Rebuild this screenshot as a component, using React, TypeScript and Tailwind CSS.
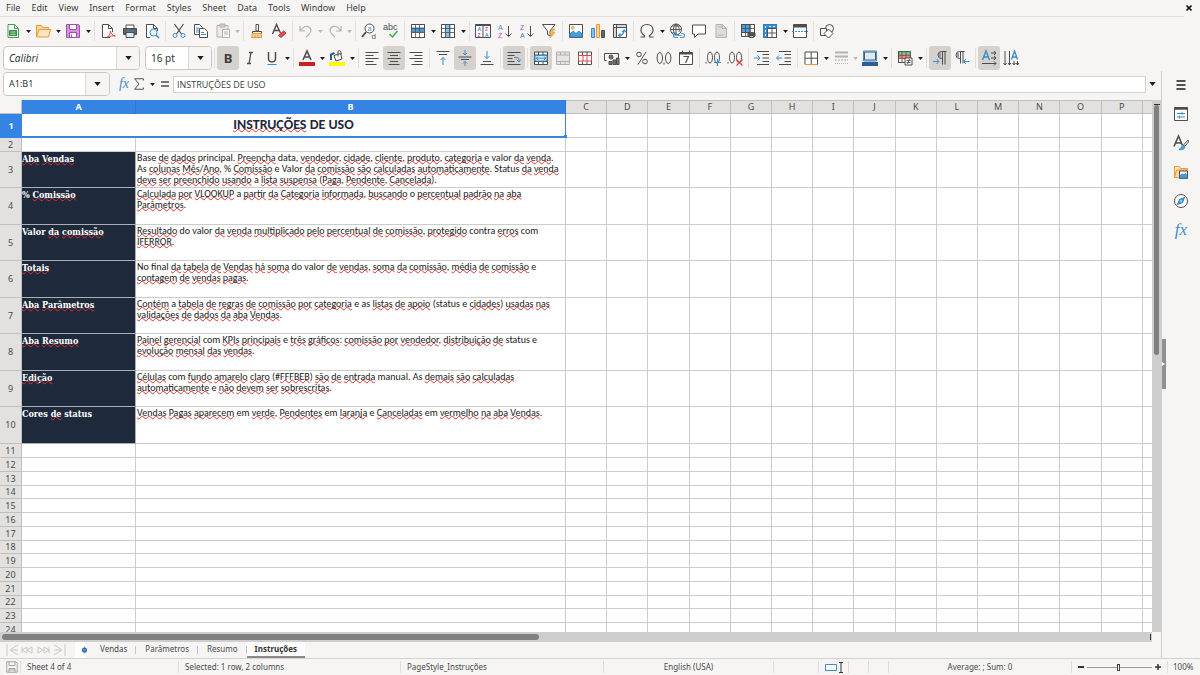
import type { ReactNode } from "react"
import { clsx } from "clsx"

const MENUS = ["File", "Edit", "View", "Insert", "Format", "Styles", "Sheet", "Data", "Tools", "Window", "Help"]
const COLUMNS = ["C", "D", "E", "F", "G", "H", "I", "J", "K", "L", "M", "N", "O", "P"]
const SHEETS = ["Vendas", "Parâmetros", "Resumo", "Instruções"]

const INSTRUCTIONS = [
  {
    title: "Aba Vendas",
    text: "Base de dados principal. Preencha data, vendedor, cidade, cliente, produto, categoria e valor da venda.\nAs colunas Mês/Ano, % Comissão e Valor da comissão são calculadas automaticamente. Status da venda\ndeve ser preenchido usando a lista suspensa (Paga, Pendente, Cancelada).",
  },
  {
    title: "% Comissão",
    text: "Calculada por VLOOKUP a partir da Categoria informada, buscando o percentual padrão na aba\nParâmetros.",
  },
  {
    title: "Valor da comissão",
    text: "Resultado do valor da venda multiplicado pelo percentual de comissão, protegido contra erros com\nIFERROR.",
  },
  {
    title: "Totais",
    text: "No final da tabela de Vendas há soma do valor de vendas, soma da comissão, média de comissão e\ncontagem de vendas pagas.",
  },
  {
    title: "Aba Parâmetros",
    text: "Contém a tabela de regras de comissão por categoria e as listas de apoio (status e cidades) usadas nas\nvalidações de dados da aba Vendas.",
  },
  {
    title: "Aba Resumo",
    text: "Painel gerencial com KPIs principais e três gráficos: comissão por vendedor, distribuição de status e\nevolução mensal das vendas.",
  },
  {
    title: "Edição",
    text: "Células com fundo amarelo claro (#FFFBEB) são de entrada manual. As demais são calculadas\nautomaticamente e não devem ser sobrescritas.",
  },
  {
    title: "Cores de status",
    text: "Vendas Pagas aparecem em verde, Pendentes em laranja e Canceladas em vermelho na aba Vendas.",
  },
]

// Words the English dictionary accepts, everything else gets a red wave
const KNOWN_WORDS = new Set([
  "Base", "principal", "data", "e", "valor", "Valor", "As", "as", "Status", "status", "a", "o", "do",
  "contra", "com", "No", "final", "em", "manual", "Cores", "DE", "USO",
])

function Spellchecked({ text }: { text: string }) {
  return (
    <>
      {text.split(/(\p{L}+)/u).map((part, i) =>
        i % 2 === 1 && !KNOWN_WORDS.has(part) ? (
          <span key={i} className="underline decoration-wavy decoration-[#e03030] decoration-1 [text-decoration-skip-ink:none] [text-underline-offset:-1px]">
            {part}
          </span>
        ) : (
          part
        )
      )}
    </>
  )
}

function Icon({ children, className = "h-4 w-4" }: { children: ReactNode; className?: string }) {
  return (
    <svg
      viewBox="0 0 16 16"
      className={clsx("shrink-0 overflow-visible font-['Liberation_Sans',sans-serif]", className)}
      fill="none"
      stroke="#4d4d4d"
      aria-hidden="true"
    >
      {children}
    </svg>
  )
}

function Caret({ dim, className = "h-[3px] w-[5px]" }: { dim?: boolean; className?: string }) {
  return (
    <svg viewBox="0 0 8 5" className={className} fill={dim ? "#b8b8b8" : "#1a1a1a"} aria-hidden="true">
      <path d="M0 0h8L4 5z" />
    </svg>
  )
}

interface ToolProps {
  label: string
  children: ReactNode
  menu?: boolean
  active?: boolean
  dim?: boolean
}

function Tool({ label, children, menu, active, dim }: ToolProps) {
  return (
    <>
      <button
        type="button"
        title={label}
        aria-label={label}
        aria-pressed={active}
        disabled={dim}
        className={clsx("flex h-6 w-[22px] shrink-0 items-center justify-center rounded-[3px]", active && "bg-[#d5d1cd]")}
      >
        <Icon className={dim ? "h-4 w-4 opacity-40 grayscale" : undefined}>{children}</Icon>
      </button>
      {menu && (
        <button
          type="button"
          aria-label={`${label} options`}
          disabled={dim}
          className={clsx("flex h-6 shrink-0 items-center justify-center", dim ? "w-[7px]" : "w-2")}
        >
          <Caret dim={dim} className="mt-0.5 h-[3px] w-[5px]" />
        </button>
      )}
    </>
  )
}

function Separator() {
  return <div className="mx-0.5 h-5 w-px shrink-0 bg-[#e2e0de]" />
}

const TABLE_GRID = "M1.5 1.5h13v13h-13zM1.5 5.5h13M1.5 9.5h13M5.5 1.5v13M9.5 1.5v13"

function StandardToolbar() {
  return (
    <div className="flex h-[27px] items-center pl-0.5">
      <Tool label="New" menu>
        <path d="M3 1.5h6.500l4 4v9H3z" fill="#fff" stroke="#3f9b4f" />
        <path d="M9.500 1.500v4h4" stroke="#3f9b4f" />
        <path d="M4.500 7.500h7v5h-7z M4.500 10h7 M8 7.500v5" fill="#3f9b4f" stroke="#2f8a40" />
        <path d="M5.500 9h5M5.500 11.300h5" stroke="#fff" strokeWidth=".7" />
      </Tool>
      <Tool label="Open" menu>
        <path d="M1.500 13.500v-11h5l1 2h6v2.500" fill="#fbd9a0" stroke="#e79a3c" />
        <path d="M1.500 14l2.500-7.500h11.500L13.500 14z" fill="#fce5bd" stroke="#e79a3c" />
      </Tool>
      <Tool label="Save" menu>
        <path d="M1.500 1.500h12l1 1v12h-13z" fill="#d492dc" stroke="#a34fb0" />
        <path d="M4.500 1.500h7v5h-7zM4.500 9.500h7v5h-7z" fill="#fff" stroke="#a34fb0" />
        <path d="M6.500 11.500v3" stroke="#a34fb0" />
      </Tool>
      <Separator />
      <Tool label="Export as PDF">
        <path d="M10 14.500H2.500v-13h6l4 4V9" fill="#fff" />
        <path d="M8.500 1.500v4h4" />
        <path d="M7.500 14c2-1.500 3-4 2.800-6 .8 3 2 4.500 5 5-3-.3-5 0-7.800 1z" stroke="#d9484b" fill="#fff" />
      </Tool>
      <Tool label="Print">
        <path d="M4 5V2h8v3" fill="#fff" />
        <path d="M1.500 5.500h13v6h-13z" fill="#636363" stroke="#4d4d4d" />
        <path d="M4 9.500h8v5H4z" fill="#d5ecfa" stroke="#4d4d4d" />
        <path d="M4 8h8" stroke="#3b8ccc" />
      </Tool>
      <Tool label="Toggle Print Preview">
        <path d="M6 14.500H2.500v-13h7l4 4V8" fill="#fff" />
        <path d="M9.500 1.500v4h4" />
        <circle cx="9.500" cy="9.500" r="3.500" stroke="#3b8ccc" fill="#e3f2fc" />
        <path d="M12 12l3 3" stroke="#3b8ccc" strokeWidth="1.500" />
      </Tool>
      <Separator />
      <Tool label="Cut">
        <path d="M3.500 1l7 10M12.500 1l-7 10" strokeWidth="1.200" />
        <circle cx="4" cy="12.500" r="2" stroke="#3b8ccc" />
        <circle cx="12" cy="12.500" r="2" stroke="#3b8ccc" />
      </Tool>
      <Tool label="Copy">
        <path d="M1.500 1.500h5l3 3v7h-8z" fill="#fff" />
        <path d="M6.500 5.500h5l3 3v6h-8z" fill="#fff" />
        <path d="M3 5h3M3 7h3M3 9h3M8 9.500h3M8 11.500h5" stroke="#3b8ccc" />
      </Tool>
      <Tool label="Paste" menu dim>
        <path d="M2 2.500h11V14H2z" fill="#ddd" />
        <path d="M5 1h5v3H5z" fill="#999" />
        <path d="M7.500 6.500h7v8h-7z" fill="#fff" />
        <path d="M9 9h4M9 11h4" />
      </Tool>
      <Separator />
      <Tool label="Clone Formatting">
        <path d="M7 1.500h2.500V8H7zM3.500 8.500h9v2h-9z" fill="#fff" />
        <path d="M3.500 10.500h9v4h-10z" fill="#fbd28c" stroke="#e79a3c" />
        <path d="M6 12v2.500M9 12v2.500" stroke="#e79a3c" />
      </Tool>
      <Tool label="Clear Direct Formatting">
        <path d="M1.500 11L5.500 1.500 9.500 10M3 7.500h5.500" strokeWidth="1.400" />
        <path d="M7.500 12.500l5-4.500 2.500 2-5 4.500z" fill="#e8484c" stroke="#cf3237" />
      </Tool>
      <Separator />
      <Tool label="Undo" menu dim>
        <path d="M2 3v5h5M2.500 7.500C5 3 9 2.500 11.500 4.500c3 2.500 1 6-3.500 9.500" strokeWidth="1.100" />
      </Tool>
      <Tool label="Redo" menu dim>
        <path d="M14 3v5H9M13.500 7.500C11 3 7 2.500 4.500 4.500c-3 2.500-1 6 3.500 9.500" strokeWidth="1.100" />
      </Tool>
      <Separator />
      <Tool label="Find and Replace">
        <circle cx="8.500" cy="5.500" r="4.500" fill="#fff" />
        <path d="M5 9l-4 5" strokeWidth="2" />
        <text x="6.500" y="7.500" fontSize="7" fill="#3b8ccc" stroke="none">a</text>
        <text x="10.500" y="15.500" fontSize="8" fill="#4d4d4d" stroke="none">d</text>
      </Tool>
      <Tool label="Spelling">
        <text x="0" y="7" fontSize="9" fill="#4d4d4d" stroke="none">abc</text>
        <path d="M6.500 11l3 3 5-6" stroke="#3daa57" strokeWidth="1.500" />
      </Tool>
      <Separator />
      <Tool label="Row" menu>
        <path d="M1.500 1.500h13v13h-13z" fill="#fff" />
        <path d="M1.500 5h13v4h-13z" fill="#4a9ede" stroke="#3b8ccc" />
        <path d={TABLE_GRID} strokeWidth=".8" />
      </Tool>
      <Tool label="Column" menu>
        <path d="M1.500 1.500h13v13h-13z" fill="#fff" />
        <path d="M5.500 1.500h4.500v13H5.500z" fill="#83c3ef" stroke="#3b8ccc" />
        <path d={TABLE_GRID} strokeWidth=".8" />
      </Tool>
      <Separator />
      <Tool label="Sort">
        <path d="M.5 1.500h15v13H.5zM8 3v11.500" fill="#fff" />
        <path d="M.5 2h15" strokeWidth="2" />
        <text x="2.500" y="8" fontSize="5" fontWeight="700" fill="#3b8ccc" stroke="none">A</text>
        <text x="2.500" y="14" fontSize="5" fontWeight="700" fill="#b04dbd" stroke="none">Z</text>
        <text x="10" y="8" fontSize="5" fontWeight="700" fill="#b04dbd" stroke="none">Z</text>
        <text x="10" y="14" fontSize="5" fontWeight="700" fill="#3b8ccc" stroke="none">A</text>
      </Tool>
      <Tool label="Sort Ascending">
        <text x="1" y="6.500" fontSize="7" fill="#3b8ccc" stroke="none">A</text>
        <text x="1" y="15" fontSize="7" fill="#b04dbd" stroke="none">Z</text>
        <path d="M11.500 3v10.500M8.500 10.500l3 3 3-3" />
      </Tool>
      <Tool label="Sort Descending">
        <text x="1" y="6.500" fontSize="7" fill="#b04dbd" stroke="none">Z</text>
        <text x="1" y="15" fontSize="7" fill="#3b8ccc" stroke="none">A</text>
        <path d="M11.500 3v10.500M8.500 10.500l3 3 3-3" />
      </Tool>
      <Tool label="AutoFilter">
        <path d="M1.500 1.500h12.500L9 8v5l-2.500-1.500V8z" fill="#fff" />
        <path d="M12 6l-4 5h2.500L9 15l5-5.500h-2.500L14 6z" fill="#fbb45c" stroke="#e79a3c" strokeWidth=".7" />
      </Tool>
      <Separator />
      <Tool label="Insert Image">
        <path d="M1.500 1.500h13v13h-13z" fill="#fff" />
        <path d="M2 14v-3l3-3 3 2.500L11 8l3 3v3z" fill="#4a9ede" stroke="#3b8ccc" />
        <circle cx="4.800" cy="4.800" r="1.300" fill="#fbd28c" stroke="#e79a3c" />
      </Tool>
      <Tool label="Insert Chart">
        <path d="M1.500 5.500h3v9h-3z" fill="#83c3ef" stroke="#3b8ccc" />
        <path d="M6.500 1.500h3v13h-3z" fill="#fbd28c" stroke="#e79a3c" />
        <path d="M11.500 7.500h3v7h-3z" fill="#666" />
      </Tool>
      <Tool label="Insert Pivot Table">
        <path d="M1.500 1.500h13v13h-13zM1.500 4.500h13M4.500 1.500v13" fill="#fff" />
        <path d="M7 12.500c4 0 5-2 5-5.500M10 9l2-2 2 2M8.500 10.500l-2 2 2 1.500" stroke="#3b8ccc" strokeWidth="1.200" />
        <path d="M5 3h9M3 5v9" stroke="#aaa" />
      </Tool>
      <Separator />
      <Tool label="Insert Special Character" menu>
        <path d="M1.500 14h4v-1.500C3 11 2 9 2 7c0-3.300 2.500-5.500 6-5.500S14 3.700 14 7c0 2-1 4-3.500 5.500V14h4" strokeWidth="1.200" />
      </Tool>
      <Tool label="Insert Hyperlink">
        <circle cx="7" cy="6.500" r="5.500" />
        <path d="M1.500 6.500h11M7 1v11M3 3h8M3 10h4M7 1C3.500 4 3.500 9 7 12M7 1c3.500 3 3.500 6 3 8" strokeWidth=".9" />
        <path d="M8 10.500H6.500a2 2 0 000 4H9M12 10.500h1.500a2 2 0 010 4H11M8.500 12.500h4" stroke="#4a9ede" strokeWidth="1.200" />
      </Tool>
      <Tool label="Insert Comment">
        <path d="M1.500 2h13v9H7l-3.500 3.500V11h-2z" fill="#fff" />
      </Tool>
      <Tool label="Headers and Footers" dim>
        <path d="M3 1.500h6.500l4 4v9H3z" fill="#bbb" />
        <path d="M5 4h4M5 12h6M9.500 1.500v4h4" />
      </Tool>
      <Separator />
      <Tool label="Define Print Area">
        <path d="M1.500 1.500h13v12h-13z" fill="#fff" />
        <path d="M1.500 1.500h8.500v8H1.500z" fill="#4a9ede" />
        <path d="M1.500 1.500h13v12h-13zM1.500 5.500h13M1.500 9.500h13M5.500 1.500v12M10 1.500v12" strokeWidth=".8" />
        <path d="M8 10h7v3H8z" fill="#555" />
        <path d="M9.500 12.500h4v2h-4z" fill="#9fd0f2" />
      </Tool>
      <Tool label="Freeze Rows and Columns" menu>
        <path d="M1.500 1.500h13v13h-13z" fill="#fff" />
        <path d="M1.500 1.500h13v4h-9v9h-4z" fill="#3b8ccc" stroke="#2f7dbb" />
        <path d="M5.500 5.500h9v9h-9zM5.500 10h9M10 5.500v9" strokeWidth=".9" />
        <path d="M3.500 3v2M3.500 7v2M3.500 11v2M7 3.500h2M11 3.500h2" stroke="#d5ecfa" />
      </Tool>
      <Tool label="Split Window">
        <path d="M1.500 1.500h13v13h-13z" fill="#fff" />
        <path d="M1.500 3h13" strokeWidth="3" />
        <path d="M0 8.500h16" stroke="#3b8ccc" strokeDasharray="2 1" />
      </Tool>
      <Separator />
      <Tool label="Show Draw Functions">
        <circle cx="10.500" cy="5.500" r="4" />
        <path d="M1.500 5.500h6v7h-6z" fill="#f6f5f4" />
        <path d="M9.500 6l4.500 4.500L9.500 15 5 10.500z" fill="#fff" />
      </Tool>
    </div>
  )
}

interface PickerProps {
  label: string
  value: string
  className: string
  italic?: boolean
}

function Picker({ label, value, className, italic }: PickerProps) {
  return (
    <div className={clsx("relative flex h-6 shrink-0 rounded-[4px] border border-[#cdc7c2] bg-white", className)}>
      <select
        aria-label={label}
        className={clsx("w-full appearance-none bg-transparent pl-[5px] pr-6 text-[10px] leading-4 text-[#2e3436] outline-none", italic && "italic")}
        defaultValue={value}
      >
        <option>{value}</option>
      </select>
      <div className="pointer-events-none absolute inset-y-0 right-0 flex w-[23px] items-center justify-center rounded-r-[3px] border-l border-[#dcd8d5] bg-[#f6f5f4]">
        <Caret className="h-1 w-[7px]" />
      </div>
    </div>
  )
}

function FormattingToolbar() {
  return (
    <div className="flex h-[27px] items-center pl-[3px]">
      <Picker label="Font Name" value="Calibri" className="w-[137px]" italic />
      <Picker label="Font Size" value="16 pt" className="ml-[5px] w-[67px]" />
      <Separator />
      <Tool label="Bold" active>
        <text x="8" y="13" fontSize="13" fontWeight="700" textAnchor="middle" fill="#3d3d3d" stroke="none" fontFamily="Noto Sans">B</text>
      </Tool>
      <Tool label="Italic">
        <path d="M7 2.500h4M5 13.500h4M9 2.500l-2 11" strokeWidth="1.300" />
      </Tool>
      <Tool label="Underline" menu>
        <path d="M4.500 2v6.500c0 4.500 7 4.500 7 0V2" strokeWidth="1.500" />
        <path d="M3.500 14.500h9" stroke="#3b8ccc" />
      </Tool>
      <Separator />
      <Tool label="Font Color" menu>
        <path d="M4 10l4-9 4 9M5.500 7h5" strokeWidth="1.600" />
        <path d="M0 14h16" stroke="#c9211e" strokeWidth="4" />
      </Tool>
      <Tool label="Background Color" menu>
        <path d="M5 5.500l6.500-2 1.500 5.500-6 2z" fill="#fff" />
        <path d="M9 6.500V1.500c0-1.500 3-1 3 1l.5 2" />
        <path d="M2 10V4.500l3.500-1.500" stroke="#2a6099" strokeWidth="2" />
        <path d="M0 14h16" stroke="#ffff00" strokeWidth="4" />
      </Tool>
      <Separator />
      <Tool label="Align Left">
        <path d="M1.500 2.500h13M1.500 5.500h8M1.500 8.500h13M1.500 11.500h8M1.500 14.500h11" />
      </Tool>
      <Tool label="Center Horizontally" active>
        <path d="M1.500 2.500h13M4 5.500h8M1.500 8.500h13M4 11.500h8M2.500 14.500h11" />
      </Tool>
      <Tool label="Align Right">
        <path d="M1.500 2.500h13M6.500 5.500h8M1.500 8.500h13M6.500 11.500h8M3.500 14.500h11" />
      </Tool>
      <Separator />
      <Tool label="Align Top">
        <path d="M1.500 1.500h13M4 4.500h8" />
        <path d="M8 15V7.500M5.500 10L8 7.500l2.500 2.500" stroke="#3b8ccc" />
      </Tool>
      <Tool label="Center Vertically" active>
        <path d="M1.500 7h13M4 9.500h8" />
        <path d="M8 0v5M6 3l2 2 2-2M8 16v-4.500M6 13.500l2-2 2 2" stroke="#3b8ccc" />
      </Tool>
      <Tool label="Align Bottom">
        <path d="M4 11.500h8M1.500 14.500h13" />
        <path d="M8 1v7.500M5.500 6L8 8.500 10.500 6" stroke="#3b8ccc" />
      </Tool>
      <Separator />
      <Tool label="Wrap Text" active>
        <path d="M1.500 2.500h13M1.500 5.500h7M1.500 8.500h5M1.500 11.500h7M1.500 14.500h13" />
        <path d="M8 7.500h3c2 0 2 1 2 4M10.500 9.500l2.500 2.500 2-2.500" stroke="#3b8ccc" />
      </Tool>
      <Separator />
      <Tool label="Merge and Center Cells" active>
        <path d="M1.500 2h13v12.500h-13zM1.500 5h13M1.500 11.500h13M5.500 2v3M10 2v3M5.500 11.500v3M10 11.500v3" fill="#fff" />
        <path d="M2 5.500h12v5.500H2z" fill="#d5ecfa" stroke="#3b8ccc" />
        <path d="M3 8.200h10M5 6.500L3.500 8.200 5 10M11 6.500l1.500 1.700L11 10" stroke="#3b8ccc" />
      </Tool>
      <Tool label="Merge Cells" dim>
        <path d="M1.500 2h13v12.500h-13zM1.500 5h13M1.500 11.500h13M5.500 2v3M10 2v3M5.500 11.500v3M10 11.500v3" fill="#ccc" />
      </Tool>
      <Tool label="Unmerge Cells">
        <path d="M1.500 2h13v12.500h-13zM5.500 2v3M10 2v3M5.500 11.500v3M10 11.500v3" fill="#fff" />
        <path d="M1.500 5.500h13v5.500h-13zM6 5.500V11M10 5.500V11" stroke="#d9484b" fill="#fff" />
      </Tool>
      <Separator />
      <Tool label="Format as Currency" menu>
        <path d="M2.500 10.500h-2v-7h14v6" />
        <circle cx="7" cy="7" r="2" fill="#777" />
        <path d="M5 11.500h3v3H5zM9 10h3v4.500H9zM12.500 8H15v6.500h-2.500z" fill="#777" />
      </Tool>
      <Tool label="Format as Percent">
        <circle cx="5" cy="4.500" r="2.300" />
        <circle cx="11" cy="11.500" r="2.300" />
        <path d="M12 2L4 14.500" />
      </Tool>
      <Tool label="Format as Number">
        <ellipse cx="3.800" cy="8" rx="2.700" ry="5.500" />
        <ellipse cx="12.200" cy="8" rx="2.700" ry="5.500" />
        <path d="M8 12.500v2" />
      </Tool>
      <Tool label="Format as Date">
        <path d="M1.500 2.500h13v12h-13zM4.500.5v3M11.500.5v3" fill="#fff" />
        <path d="M1.500 3.500h13" strokeWidth="2" />
        <path d="M5.500 6.500h5l-3 6.500" strokeWidth="1.200" />
      </Tool>
      <Separator />
      <Tool label="Add Decimal Place">
        <ellipse cx="5" cy="7.500" rx="2.500" ry="5.500" />
        <ellipse cx="12" cy="7.500" rx="2.500" ry="5.500" />
        <path d="M1 12v1.500" />
        <path d="M12.500 9v7M9 12.500h7" stroke="#3b8ccc" strokeWidth="1.200" />
      </Tool>
      <Tool label="Delete Decimal Place">
        <ellipse cx="5" cy="7.500" rx="2.500" ry="5.500" />
        <ellipse cx="12" cy="7.500" rx="2.500" ry="5.500" />
        <path d="M1 12v1.500" />
        <path d="M9.500 9.500l6 6M15.500 9.500l-6 6" stroke="#e8484c" strokeWidth="1.200" />
      </Tool>
      <Separator />
      <Tool label="Increase Indent">
        <path d="M3 1.500h12M8.500 4.500H15M8.500 8H15M8.500 11.500H15M3 14.500h12" />
        <path d="M0 8h6M3.500 5.500L6 8l-2.500 2.500" stroke="#3b8ccc" />
      </Tool>
      <Tool label="Decrease Indent">
        <path d="M3 1.500h12M8.500 4.500H15M8.500 8H15M8.500 11.500H15M3 14.500h12" />
        <path d="M.5 8h6M3 5.500L.5 8 3 10.500" stroke="#3b8ccc" />
      </Tool>
      <Separator />
      <Tool label="Borders" menu>
        <path d="M2 2h12.500v12.500H2zM8.200 2v12.500M2 8.200h12.500" fill="#fff" />
        <path d="M2 14.500h12.500" stroke="#e79a3c" />
      </Tool>
      <Tool label="Border Style" menu dim>
        <path d="M2 2.500h13M2 6.500h13" strokeWidth="2" />
        <path d="M2 10h13" strokeDasharray="2 1" />
        <path d="M2 13.500h13" strokeDasharray="1 1" />
      </Tool>
      <Tool label="Border Color" menu>
        <path d="M2.500 2h11v8h-11z" fill="#d5ecfa" stroke="#555" />
        <path d="M1.500 1h13v10h-13z" stroke="#3b8ccc" />
        <path d="M0 14h16" stroke="#2a6099" strokeWidth="4" />
      </Tool>
      <Separator />
      <Tool label="Conditional" menu>
        <path d="M1.500 1.500h12v11h-12z" fill="#fff" />
        <path d="M2 2h11v3H2z" fill="#8fd19e" stroke="#3f9b4f" />
        <path d="M2 5.500h11v3H2z" fill="#f08d8d" stroke="#d9484b" />
        <path d="M1.500 1.500v11H8M5 2v10M9 2v6" strokeWidth=".8" />
        <path d="M8 8h7v7H8z" fill="#fff" />
        <path d="M9.500 10.500h4M9.500 12.500h4M12.500 9l-2 5" strokeWidth=".9" />
      </Tool>
      <Separator />
      <Tool label="Left-To-Right" active>
        <path d="M14.500 1.500h-5a3.500 3.500 0 000 7h1M10.500 1.500v13M13 1.500v13" />
        <path d="M8 2.500v5" stroke="#999" strokeWidth="2" />
        <path d="M1 11.500h6M4.500 9L7 11.500 4.500 14" stroke="#3b8ccc" />
      </Tool>
      <Tool label="Right-To-Left">
        <path d="M10.500 1.500h-5a3.500 3.500 0 000 7h1M6.500 1.500v12M9 1.500v12" />
        <path d="M4 2.500v5" stroke="#999" strokeWidth="2" />
        <path d="M10 11.500h5.500M12 9l-2.500 2.500L12 14" stroke="#3b8ccc" />
      </Tool>
      <Separator />
      <Tool label="Text direction from left to right" active>
        <path d="M1.500 10l3.500-9 3.500 9M2.500 7h5" stroke="#3b8ccc" strokeWidth="1.400" />
        <path d="M10 3h5M13 1l2 2-2 2M10 8h5M13 6l2 2-2 2M1 13.500h14M13 11.500l2 2-2 2" />
      </Tool>
      <Tool label="Text direction from top to bottom">
        <path d="M8.500 9.500l3-8.500 3 8.500M9.500 7h4" stroke="#3b8ccc" strokeWidth="1.400" />
        <path d="M2 1v14M.5 13L2 15l1.500-2M6.500 1v14M5 13l1.500 2L8 13M11 11v4M9.500 13l1.500 2 1.500-2M14.500 11v4M13 13l1.500 2 1.500-2" />
      </Tool>
    </div>
  )
}

function FormulaBar() {
  return (
    <div className="flex h-[29px] shrink-0 items-center pb-[3px] pl-[3px]">
      <div className="flex h-6 w-[107px] shrink-0 overflow-hidden rounded-[4px] border border-[#cdc7c2] bg-white">
        <input aria-label="Name Box" defaultValue="A1:B1" className="min-w-0 flex-1 pl-[5px] text-[9px] text-[#2e3436] outline-none" />
        <button type="button" aria-label="Cell references" className="flex w-6 items-center justify-center border-l border-[#dcd8d5] bg-[#f6f5f4]">
          <Caret className="h-1 w-[7px]" />
        </button>
      </div>
      <button type="button" aria-label="Function Wizard" className="ml-2 w-3 text-center font-['Liberation_Serif',serif] text-[14px] leading-5 text-[#3b8ccc] italic">
        fx
      </button>
      <button type="button" aria-label="Select Function" className="ml-px flex items-center">
        <Icon className="h-[14px] w-4">
          <path d="M13 4V2H3l5 6-5 6h10v-2" strokeWidth="1.100" />
        </Icon>
        <Caret className="ml-[3px] h-[3px] w-[5px]" />
      </button>
      <button type="button" aria-label="Formula" className="ml-[6px]">
        <svg viewBox="0 0 8 6" className="h-1.5 w-2" aria-hidden="true">
          <path d="M0 1h8M0 5h8" stroke="#4d4d4d" strokeWidth="1.500" />
        </svg>
      </button>
      <input
        aria-label="Input line"
        defaultValue="INSTRUÇÕES DE USO"
        className="ml-1 h-[17px] min-w-0 flex-1 border border-[#d5d2cf] bg-white pl-[3px] font-['Open_Sans',sans-serif] text-[9px] text-[#3d3d3d] outline-none"
      />
      <button type="button" aria-label="Expand Formula Bar" className="flex w-3 shrink-0 items-center justify-center">
        <Caret className="h-1 w-[7px]" />
      </button>
      <div className="w-[3px]" />
    </div>
  )
}

const HEAD = "border-r border-b border-[#bfbfbf] bg-[#e2e1e0] text-center font-['Noto_Sans',sans-serif] text-[9px] leading-3 font-normal text-[#4a4a4a]"
const CELL = "border-r border-b border-[#cccccc]"

function EmptyCells() {
  return (
    <>
      {COLUMNS.map((col) => (
        <td key={col} className={CELL} />
      ))}
      <td className="border-b border-[#cccccc]" />
    </>
  )
}

function Grid() {
  return (
    <table className="w-full table-fixed border-separate border-spacing-0 bg-white">
      <colgroup>
        <col className="w-[22px]" />
        <col className="w-[114px]" />
        <col className="w-[430px]" />
        {COLUMNS.map((col) => (
          <col key={col} />
        ))}
        <col className="w-[9px]" />
      </colgroup>
      <thead>
        <tr className="h-3.5">
          <td className="border-r border-b border-[#bfbfbf] bg-[#f6f5f4]" />
          {["A", "B"].map((col) => (
            <th key={col} scope="col" className="border-r border-[#2f76cc] bg-[#3584e4] font-['Noto_Sans',sans-serif] text-[9px] leading-3 font-bold text-white">
              {col}
            </th>
          ))}
          {COLUMNS.map((col) => (
            <th key={col} scope="col" className={clsx(HEAD, "border-t")}>
              {col}
            </th>
          ))}
          <td className="border-t border-b border-[#bfbfbf] bg-[#e2e1e0]" />
        </tr>
      </thead>
      <tbody>
        <tr className="h-6">
          <th scope="row" className="bg-[#3584e4] font-['Noto_Sans',sans-serif] text-[9px] leading-3 font-bold text-white">1</th>
          <td
            colSpan={2}
            className="relative border-r border-b-2 border-[#3584e4] text-center font-[Carlito,Lato,sans-serif] text-[14px] leading-4 font-bold text-[#1e293b]"
          >
            <Spellchecked text="INSTRUÇÕES DE USO" />
            <span className="absolute -right-0.5 -bottom-0.5 h-[3px] w-[3px] bg-[#3584e4]" />
          </td>
          <EmptyCells />
        </tr>
        <tr className="h-3.5">
          <th scope="row" className={HEAD}>2</th>
          <td className={CELL} />
          <td className={CELL} />
          <EmptyCells />
        </tr>
        {INSTRUCTIONS.map((row, i) => (
          <tr key={row.title} className={i % 2 === 0 ? "h-9" : "h-[37px]"}>
            <th scope="row" className={HEAD}>{i + 3}</th>
            <td className="border-r border-b border-[#aab0b8] bg-[#1e293b] pt-0.5 align-top font-['DejaVu_Serif_Condensed','DejaVu_Serif',serif] text-[9px] leading-[11px] font-bold whitespace-nowrap text-white">
              <Spellchecked text={row.title} />
            </td>
            <td className={clsx(CELL, "pl-px align-top font-[Carlito,Lato,sans-serif] text-[10px] leading-[11px] whitespace-pre text-[#1a1a1a]")}>
              <Spellchecked text={row.text} />
            </td>
            <EmptyCells />
          </tr>
        ))}
        {Array.from({ length: 14 }, (_, i) => (
          <tr key={i} className={i % 4 === 3 ? "h-[13px]" : "h-3.5"}>
            <th scope="row" className={HEAD}>{i + 11}</th>
            <td className={CELL} />
            <td className={CELL} />
            <EmptyCells />
          </tr>
        ))}
      </tbody>
    </table>
  )
}

function SheetTabs() {
  return (
    <div className="flex h-4 shrink-0 items-stretch text-[8px] leading-[14px] text-[#4a4a4a]">
      <button type="button" aria-label="Sheet navigation" className="ml-[6px] flex w-[61px] items-center">
        <svg viewBox="0 0 60 12" className="h-3 w-[60px]" fill="none" stroke="#c8c8c8" aria-hidden="true">
          <path d="M1 0v12M12 1L4 6l8 5M4 6h8M21 3l-5 3 5 3zM26 3l-5 3 5 3zM32 3v6l5-3zM38 3v6l5-3zM48 1l8 5-8 5M48 6h8M59 0v12M16 3v6M43 3v6" />
        </svg>
      </button>
      <button type="button" aria-label="Add Sheet" className="ml-2 flex w-4 items-center bg-[linear-gradient(90deg,#fff_10px,transparent_10px)]">
        <svg viewBox="0 0 16 16" className="h-4 w-4" aria-hidden="true">
          <circle cx="9.500" cy="8" r="1.800" fill="#fff" stroke="#2a6cb5" strokeWidth="1.500" />
          <path d="M9.500 4.500v7M7 8h5" stroke="#2a6cb5" strokeWidth=".6" />
        </svg>
      </button>
      <nav className="flex items-stretch" aria-label="Sheets">
        {SHEETS.map((sheet, i) => (
          <button
            key={sheet}
            type="button"
            aria-current={i === 3}
            className={clsx(
              "relative flex items-start",
              i === 3
                ? "border-b-2 border-[#8a8a8a] bg-white px-2 font-bold text-[#333]"
                : "px-[9px] after:absolute after:top-1 after:right-0 after:h-2 after:w-px after:bg-[#c4c4c4]"
            )}
          >
            {sheet}
          </button>
        ))}
      </nav>
    </div>
  )
}

function Sidebar() {
  return (
    <aside className="relative flex w-[39px] shrink-0 flex-col items-center gap-[13px] border-l border-[#cfcdcb] pt-1.5">
      <button type="button" aria-label="Sidebar Settings">
        <Icon>
          <path d="M3.500 4h9M3.500 8h9M3.500 12h9" stroke="#1a1a1a" strokeWidth="1.600" />
        </Icon>
      </button>
      <button type="button" aria-label="Properties">
        <Icon>
          <path d="M1.500 1.500h13v13h-13z" fill="#fff" />
          <path d="M1.500 2.500h13" strokeWidth="2.500" />
          <path d="M4 7.500h8M4 11h8M9 5.800v3M6.500 9.500v3" stroke="#3b8ccc" />
        </Icon>
      </button>
      <button type="button" aria-label="Styles">
        <Icon>
          <path d="M1 11.500L5.500 1l4 9.500M2.500 8h6" strokeWidth="1.600" />
          <path d="M15 5l-4.500 5 1 1.500L15.500 7z" fill="#fff" />
          <path d="M10.500 10.500c-2 0-2 3-4.500 4 3 .8 6-.5 6-3z" fill="#4a9ede" stroke="#3b8ccc" />
        </Icon>
      </button>
      <button type="button" aria-label="Gallery">
        <Icon>
          <path d="M1.500 13.500v-11h5l1 2h7v2" fill="#fce5bd" stroke="#e79a3c" />
          <path d="M1.500 13.500L3.500 6h11v7.500z" fill="#fbd9a0" stroke="#e79a3c" />
          <path d="M6.500 7h8v7.500h-8z" fill="#fff" />
          <path d="M7 14v-2.500l2-1.500 2 1 1.500-1.500 1.500 2V14z" fill="#4a9ede" stroke="#3b8ccc" />
        </Icon>
      </button>
      <button type="button" aria-label="Navigator">
        <Icon>
          <circle cx="8" cy="8" r="6.500" fill="#fff" />
          <path d="M11.500 4.500l-2 5-5 2 2-5z" fill="#4a9ede" stroke="#2f7dbb" />
          <circle cx="8" cy="8" r=".8" fill="#fff" stroke="none" />
        </Icon>
      </button>
      <button type="button" aria-label="Functions" className="h-4 font-['Liberation_Serif',serif] text-[17px] leading-4 text-[#3b8ccc] italic">
        fx
      </button>
      <button type="button" aria-label="Hide Sidebar" className="absolute top-[268px] left-0 flex h-[50px] w-1 items-center bg-[#8f9190]">
        <svg viewBox="0 0 4 4" className="h-1 w-1" fill="#fff" aria-hidden="true">
          <path d="M0 0l3 2-3 2z" />
        </svg>
      </button>
    </aside>
  )
}

const STATUS = "flex h-3 shrink-0 items-center border-l border-[#e0dedc]"

function StatusBar() {
  return (
    <footer className="flex h-[17px] shrink-0 items-center border-t border-[#d5d3d1] text-[8px] leading-3 text-[#4a4a4a]">
      <div className="flex w-5 justify-end pr-0.5">
        <Icon className="h-3 w-3">
          <path d="M1 1h12l2 2v12H1zM4 1v5h8V1M4 15v-5h8v5M4 12h8" stroke="#a0a0a0" strokeWidth="1.300" />
        </Icon>
      </div>
      <div className={clsx(STATUS, "w-[158px] pl-1.5")}>Sheet 4 of 4</div>
      <div className={clsx(STATUS, "w-[222px] pl-1.5")}>Selected: 1 row, 2 columns</div>
      <div className={clsx(STATUS, "w-[203px] pl-1.5")}>PageStyle_Instruções</div>
      <div className={clsx(STATUS, "min-w-0 flex-1 justify-center")}>English (USA)</div>
      <div className={clsx(STATUS, "w-[45px]")} />
      <div className={clsx(STATUS, "w-[30px] justify-center")}>
        <svg viewBox="0 0 20 12" className="h-3 w-5" fill="none" aria-hidden="true">
          <path d="M1.500 3.500h11v6h-11z" fill="#fff" stroke="#3b8ccc" />
          <path d="M15 1.500h4M15 11.500h4M17 1.500v10" stroke="#333" />
        </svg>
      </div>
      <div className={clsx(STATUS, "w-5")} />
      <div className={clsx(STATUS, "w-5")} />
      <div className={clsx(STATUS, "w-[183px] justify-center")}>Average: ; Sum: 0</div>
      <div className={clsx(STATUS, "w-[96px] justify-between px-1.5")}>
        <button type="button" aria-label="Zoom Out" className="h-0.5 w-1.5 bg-[#333]" />
        <input
          type="range"
          aria-label="Zoom"
          defaultValue={48}
          className="h-2 w-[65px] appearance-none bg-[linear-gradient(#999,#999)] bg-[length:100%_1px] bg-center bg-no-repeat [&::-webkit-slider-thumb]:h-[7px] [&::-webkit-slider-thumb]:w-[3px] [&::-webkit-slider-thumb]:appearance-none [&::-webkit-slider-thumb]:border [&::-webkit-slider-thumb]:border-[#444] [&::-webkit-slider-thumb]:bg-white"
        />
        <button type="button" aria-label="Zoom In">
          <svg viewBox="0 0 6 6" className="h-1.5 w-1.5" aria-hidden="true">
            <path d="M0 3h6M3 0v6" stroke="#333" strokeWidth="1.500" />
          </svg>
        </button>
      </div>
      <div className={clsx(STATUS, "w-[33px] pl-[5px]")}>100%</div>
    </footer>
  )
}

export default function App() {
  return (
    <div className="flex h-screen flex-col overflow-hidden bg-[#f6f5f4] font-['Noto_Sans',sans-serif]">
      <header className="shrink-0">
        <div className="mr-4 flex h-[17px] items-center border-b border-[#e2e0de] pl-1.5">
          <nav className="flex gap-[11px] text-[9px] leading-4 text-[#3d3d3d]" aria-label="Menu">
            {MENUS.map((menu) => (
              <button key={menu} type="button">{menu}</button>
            ))}
          </nav>
          <button type="button" aria-label="Close Document" className="-mr-2 ml-auto">
            <svg viewBox="0 0 6 6" className="h-1.5 w-1.5" aria-hidden="true">
              <path d="M.5.5l5 5M5.500.5l-5 5" stroke="#1a1a1a" strokeWidth="1.600" />
            </svg>
          </button>
        </div>
        <StandardToolbar />
        <FormattingToolbar />
      </header>

      <div className="flex min-h-0 flex-1">
        <main className="flex min-w-0 flex-1 flex-col">
          <FormulaBar />
          <div className="flex min-h-0 flex-1">
            <div className="min-w-0 flex-1 overflow-hidden">
              <Grid />
            </div>
            {/* Vertical scrollbar */}
            <div className="flex w-[9px] shrink-0 flex-col items-center bg-[#cecece]">
              <div className="mt-1 h-px w-1.5 bg-[#333]" />
              <div className="h-[250px] w-[5px] rounded-full bg-[#7f807f]" />
            </div>
          </div>
          {/* Horizontal scrollbar */}
          <div className="mr-[9px] flex h-2.5 shrink-0 items-center bg-[#cecece] pl-0.5">
            <div className="h-1.5 w-7/15 rounded-full bg-[#7f807f]" />
            <div className="mr-px ml-auto h-1.5 w-px bg-[#333]" />
          </div>
          <SheetTabs />
        </main>
        <Sidebar />
      </div>
      <StatusBar />
    </div>
  )
}
